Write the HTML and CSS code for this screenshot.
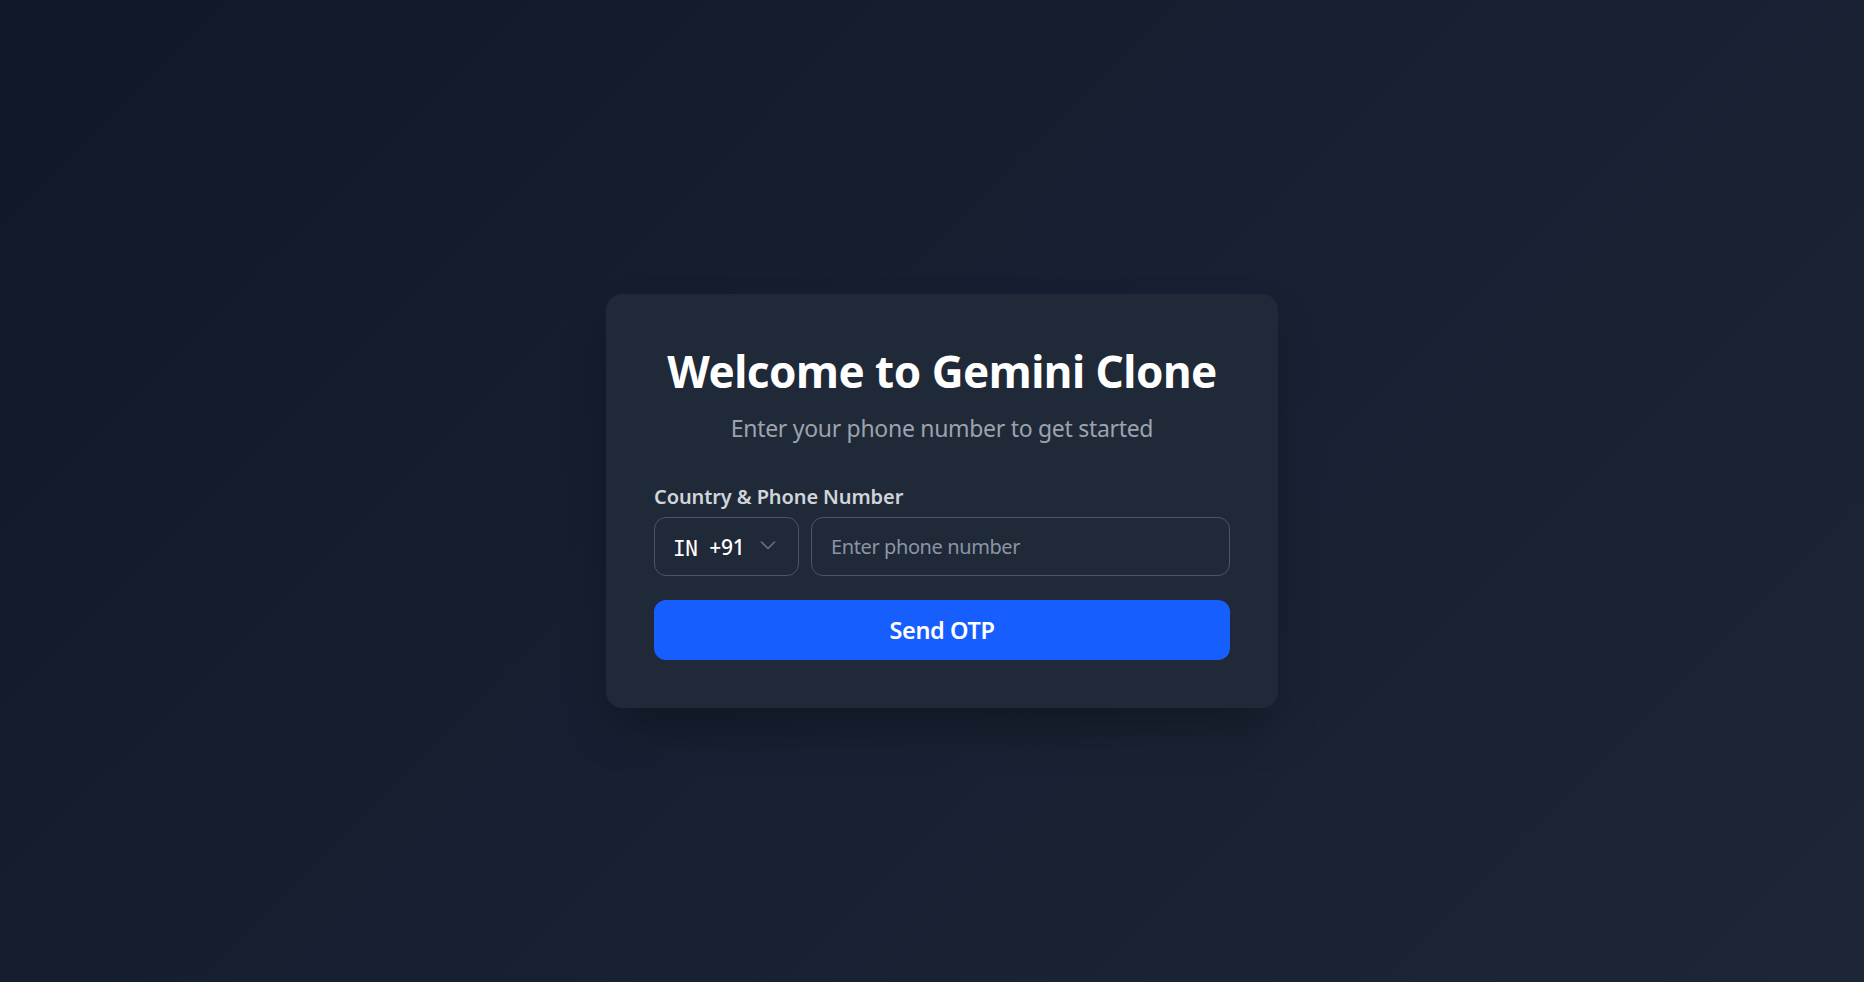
FILE: index.html
```html
<!DOCTYPE html>
<html lang="en">
<head>
<meta charset="utf-8">
<title>Gemini Clone</title>
<link rel="stylesheet" href="styles.css">
</head>
<body>
<main class="page">
  <section class="card">
    <h1 class="title">Welcome to Gemini Clone</h1>
    <p class="subtitle">Enter your phone number to get started</p>
    <form class="form">
      <label class="label" for="phone">Country &amp; Phone Number</label>
      <div class="row">
        <div class="select">
          <span class="flag">IN</span>
          <span class="code">+91</span>
          <svg class="chev" width="18" height="18" viewBox="0 0 18 18" fill="none" stroke="currentColor" stroke-width="1.6" stroke-linecap="round" stroke-linejoin="round"><path d="M2.5 6l6.5 6.5L15.5 6"/></svg>
        </div>
        <input id="phone" class="input" type="tel" placeholder="Enter phone number">
      </div>
      <button type="button" class="btn">Send OTP</button>
    </form>
  </section>
</main>
</body>
</html>
```
FILE: styles.css
```css
* { box-sizing: border-box; }
html, body { margin: 0; height: 100%; }
body {
  font-family: "Noto Sans", "Open Sans", sans-serif;
  background: linear-gradient(135deg, #111827 0%, #172032 50%, #1d2636 100%);
  color: #fff;
}
.page {
  min-height: 100vh;
  display: flex;
  align-items: center;
  justify-content: center;
  padding: 20px 0 0 20px;
}
.card {
  width: 672px;
  background: #1f2937;
  border-radius: 16px;
  padding: 48px;
  box-shadow: 0 25px 50px -12px rgba(0, 0, 0, 0.35);
  text-align: center;
}
.title {
  margin: 2px 0 0;
  font-size: 44px;
  line-height: 54px;
  font-weight: 700;
  letter-spacing: -0.5px;
  color: #fff;
}
.subtitle {
  margin: 14px 0 0;
  font-size: 23px;
  line-height: 32px;
  color: #9ca3af;
  letter-spacing: -0.3px;
}
.form {
  margin-top: 39px;
  text-align: left;
  display: flex;
  flex-direction: column;
}
.label {
  font-size: 20px;
  line-height: 28px;
  font-weight: 600;
  color: #d1d5db;
  letter-spacing: -0.1px;
}
.row {
  display: flex;
  gap: 12px;
  margin-top: 6px;
}
.select {
  width: 145px;
  height: 59px;
  border: 1px solid #4b5563;
  border-radius: 12px;
  display: flex;
  align-items: center;
  padding: 0 0 0 18px;
  color: #fff;
}
.flag {
  font-family: "DejaVu Sans Mono", monospace;
  font-size: 21px;
  margin-top: 4px;
  letter-spacing: -0.5px;
}
.code {
  font-size: 21px;
  font-weight: 500;
  margin-left: 12px;
  letter-spacing: -0.3px;
}
.chev {
  margin-left: 15px;
  color: #6b7280;
  margin-top: -3px;
}
.input {
  flex: 1;
  height: 59px;
  border: 1px solid #4b5563;
  border-radius: 12px;
  background: transparent;
  padding: 0 19px;
  font-family: inherit;
  font-size: 20px;
  color: #fff;
  outline: none;
  letter-spacing: -0.4px;
}
.input::placeholder { color: #8b95a5; }
.btn {
  margin-top: 24px;
  height: 60px;
  border: 0;
  border-radius: 12px;
  background: #175eff;
  color: #fff;
  font-family: inherit;
  font-size: 23.5px;
  font-weight: 600;
  letter-spacing: -0.4px;
  cursor: pointer;
}
```
